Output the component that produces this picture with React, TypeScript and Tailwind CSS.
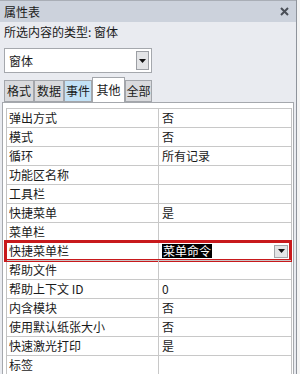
import React from 'react';

const rows: { label: string; value: string }[] = [
  { label: '弹出方式', value: '否' },
  { label: '模式', value: '否' },
  { label: '循环', value: '所有记录' },
  { label: '功能区名称', value: '' },
  { label: '工具栏', value: '' },
  { label: '快捷菜单', value: '是' },
  { label: '菜单栏', value: '' },
  { label: '快捷菜单栏', value: '菜单命令' },
  { label: '帮助文件', value: '' },
  { label: '帮助上下文 ID', value: '0' },
  { label: '内含模块', value: '否' },
  { label: '使用默认纸张大小', value: '否' },
  { label: '快速激光打印', value: '是' },
  { label: '标签', value: '' },
];

const tabs = [
  { name: '格式', w: 'w-[30px]', cls: 'bg-[#d9dadd]' },
  { name: '数据', w: 'w-[30px]', cls: 'bg-[#d9dadd]' },
  { name: '事件', w: 'w-[28px]', cls: 'bg-[#c3e2f6]' },
  { name: '其他', w: 'w-[33px]', cls: 'bg-white h-[25px] border-b-0' },
  { name: '全部', w: 'w-[27px]', cls: 'bg-[#d9dadd]' },
];

const Arrow: React.FC = () => (
  <svg width="7" height="4" viewBox="0 0 7 4">
    <path d="M0 0 H7 L3.5 4 Z" fill="#111" />
  </svg>
);

const App: React.FC = () => {
  return (
    <div className="w-[300px] h-[374px] overflow-hidden bg-[#f4f4f4] flex font-['Noto_Sans_CJK_SC',sans-serif] text-[12px] text-[#1a1a1a]">
      <div className="w-[297px] h-full border-r border-[#8e939b] bg-[#e9ebf0] flex flex-col">
        {/* title bar */}
        <div className="h-[22px] shrink-0 bg-[#ccd2dc] border-t border-[#a9aeb6] flex items-center justify-between pl-[4px] pr-[7px]">
          <span className="leading-none">属性表</span>
          <svg width="9" height="9" viewBox="0 0 9 9">
            <path d="M1 1 L8 8 M8 1 L1 8" stroke="#4a4f57" strokeWidth="2" />
          </svg>
        </div>

        <div className="h-[20px] shrink-0 flex items-center pl-[4px] leading-none">所选内容的类型: 窗体</div>

        {/* object dropdown */}
        <div className="mt-[6px] ml-[4px] w-[148px] h-[25px] shrink-0 bg-white border border-[#a5a8ad] flex items-center justify-between pl-[4px] pr-[2px]">
          <span className="leading-none">窗体</span>
          <div className="w-[13px] h-[19px] bg-[#e3e4e6] border border-[#9c9fa4] flex items-center justify-center">
            <Arrow />
          </div>
        </div>

        {/* tabs */}
        <div className="mt-[4px] ml-[4px] h-[25px] shrink-0 flex items-end">
          {tabs.map((t) => (
            <div
              key={t.name}
              className={`${t.w} h-[22px] border border-[#a3a6ab] flex items-center justify-center leading-none ${t.cls}`}
            >
              {t.name}
            </div>
          ))}
        </div>

        {/* property grid */}
        <div className="ml-[2px] w-[292px] flex-1 bg-white border-l border-t border-r border-[#a5a8ad] pl-[3px] pt-[5px]">
          <div className="w-[286px] border-l border-r border-[#c2c2c2]">
            {rows.map((r) => {
              const sel = r.label === '快捷菜单栏';
              return (
                <div key={r.label} className="relative h-[19px] flex border-t border-[#c8c8c8]">
                  <div className="w-[152px] border-r border-[#c8c8c8] pl-[2px] flex items-center leading-none">
                    {r.label}
                  </div>
                  <div className="flex-1 pl-[3px] flex items-center justify-between pr-[3px] leading-none">
                    {sel ? (
                      <>
                        <span className="bg-black text-white px-[1px] py-[1px]">{r.value}</span>
                        <div className="w-[14px] h-[13px] bg-[#e3e4e6] border border-[#a3a6ab] flex items-center justify-center">
                          <Arrow />
                        </div>
                      </>
                    ) : (
                      <span>{r.value}</span>
                    )}
                  </div>
                  {sel && (
                    <div className="absolute -left-[3px] -right-[1px] -top-[2px] h-[22px] border-[3px] border-[#c8191c] pointer-events-none" />
                  )}
                </div>
              );
            })}
          </div>
        </div>
      </div>
    </div>
  );
};

export default App;
